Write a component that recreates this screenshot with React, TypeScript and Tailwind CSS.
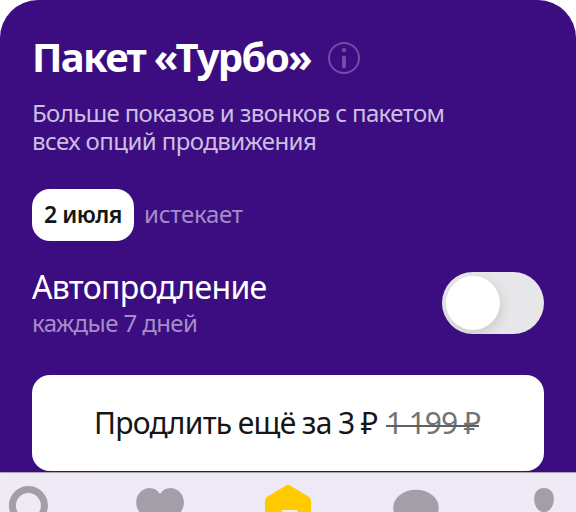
import React from "react";

function InfoIcon() {
  return (
    <svg className="mt-[9px] ml-auto h-8 w-8 shrink-0 text-[#6f4ea5]" viewBox="0 0 32 32" fill="none">
      <circle cx="16" cy="16" r="15" stroke="currentColor" strokeWidth="2" />
      <circle cx="16" cy="8.2" r="2.1" fill="currentColor" />
      <rect x="14" y="13.8" width="4" height="12.4" rx="1.6" fill="currentColor" />
    </svg>
  );
}

function Toggle() {
  return (
    <button
      role="switch"
      aria-checked="false"
      className="flex h-[62px] w-[102px] shrink-0 items-center overflow-hidden rounded-[31px] bg-[#e7e7ea] pl-1"
    >
      <span className="h-[54px] w-[54px] rounded-full bg-white shadow-[2px_4px_12px_rgba(0,0,0,0.12)]" />
    </button>
  );
}

function TabBar() {
  return (
    <nav className="flex h-10 gap-16 overflow-hidden bg-linear-to-r from-[#f0eaf6] via-[#ede9f6] to-[#f0eaf6] text-[#a29fa9] shadow-[inset_0_1px_0_#aaa5ae]">
      <svg className="h-10 w-16 shrink-0" viewBox="0 0 64 40" fill="none">
        <circle cx="28.4" cy="33.5" r="16" stroke="currentColor" strokeWidth="7" />
      </svg>
      <svg className="h-10 w-16 shrink-0" viewBox="0 0 64 40" fill="currentColor">
        <path d="M32 22C29.6 18 26 16 21.8 16C14 16 8.2 22.500 8.200 30.500C8.200 40 17 48 32 58C47 48 55.900 40 55.900 30.500C55.900 22.500 50 16 42.300 16C38.100 16 34.400 18 32 22Z" />
      </svg>
      <svg className="h-10 w-16 shrink-0" viewBox="0 0 64 40">
        <path
          d="M30.300 13.200Q32 12 33.700 13.200L52.400 24.600Q55 26.400 55 29.600V50H9V29.600Q9 26.400 11.600 24.600Z"
          fill="#ffcb00"
        />
        <path d="M25 38H41Q42 38 41.500 39L40 42H29Z" fill="#f3efec" />
      </svg>
      <svg className="h-10 w-16 shrink-0" viewBox="0 0 64 40" fill="currentColor">
        <ellipse cx="32" cy="35.500" rx="22.800" ry="17.800" />
      </svg>
      <svg className="h-10 w-16 shrink-0" viewBox="0 0 64 40" fill="currentColor">
        <path d="M32 16C38.200 16 41.800 20 41.800 27C41.800 34.500 37.500 40.200 32 40.200C26.500 40.200 22.200 34.500 22.200 27C22.200 20 25.800 16 32 16Z" />
      </svg>
    </nav>
  );
}

export default function App() {
  return (
    <div className="flex h-[512px] w-[576px] flex-col overflow-hidden bg-white font-['Noto_Sans',sans-serif] whitespace-nowrap">
      <main className="h-[472px] rounded-t-[38px] bg-[#3b0d80] px-8 pt-[33px]">
        <div className="flex h-12 w-[328px]">
          <h1 className="text-[40px] leading-[48px] font-bold tracking-[-1.65px] text-white">Пакет «Турбо»</h1>
          <InfoIcon />
        </div>
        <p className="mt-[18px] h-14 text-[24px] leading-7 tracking-[-0.63px] text-[#cdbfe0]">
          Больше показов и звонков с пакетом
          <br />
          <span className="tracking-[-0.56px]">всех опций продвижения</span>
        </p>
        <div className="mt-[34px] flex h-[52px] items-center">
          <span className="flex h-[52px] w-[102px] items-center justify-center rounded-[18px] bg-white pb-[2px] text-[23px] font-semibold tracking-[-0.5px] text-[#161616]">
            2 июля
          </span>
          <span className="ml-[10px] pb-[3px] text-[24px] tracking-[-0.25px] text-[#a48cc8]">истекает</span>
        </div>
        <div className="mt-[27px] flex h-[70px] justify-between">
          <div>
            <h2 className="-mt-px text-[32px] leading-10 tracking-[-0.65px] text-white">Автопродление</h2>
            <p className="mt-px text-[24px] leading-[29px] tracking-[-0.6px] text-[#a48cc8]">каждые 7 дней</p>
          </div>
          <div className="pt-1">
            <Toggle />
          </div>
        </div>
        <button className="mt-[37px] flex h-24 w-full items-center rounded-[18px] bg-white pb-[2px] pl-[62px] text-left text-[30px] text-[#161616]">
          <span className="w-[283px] tracking-[-0.72px] [word-spacing:-0.8px]">Продлить ещё за 3 ₽</span>
          <span className="relative ml-[9px] tracking-[-1.1px] text-[#737373]">
            1 199 ₽
            <span className="absolute top-[25px] left-0 h-[2px] w-[93px] bg-[#606060]" />
          </span>
        </button>
      </main>
      <TabBar />
    </div>
  );
}
